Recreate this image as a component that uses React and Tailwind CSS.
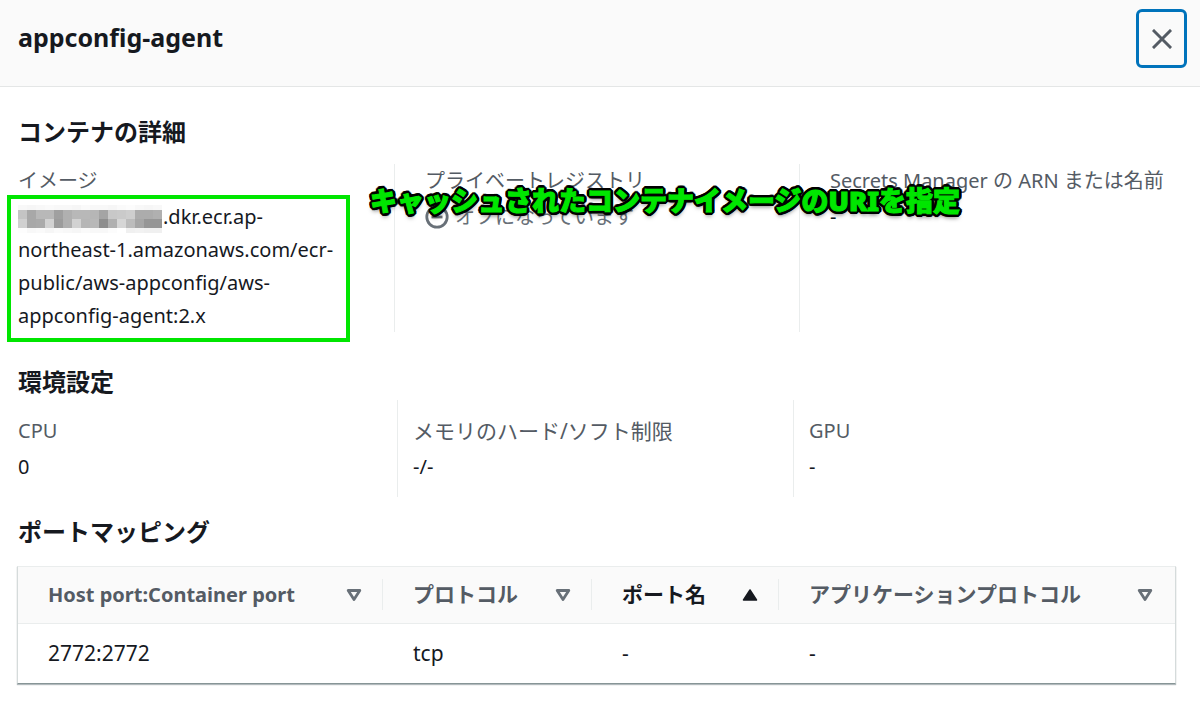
import { useState } from 'react';

// Grey levels of the masked account id, one row of 9px blocks after another
const MASK_ROWS = [
  { height: 'h-[5px]', shades: [248, 246, 248, 250, 248, 248, 246, 250, 248, 248, 246, 250, 252, 248, 246, 248] },
  { height: 'h-[9px]', shades: [196, 168, 184, 184, 160, 176, 184, 184, 182, 164, 200, 202, 206, 172, 172, 176] },
  { height: 'h-[9px]', shades: [208, 168, 170, 210, 156, 176, 210, 182, 184, 142, 176, 214, 188, 166, 150, 150] },
  { height: 'h-[5px]', shades: [253, 248, 250, 246, 250, 248, 246, 250, 248, 248, 252, 255, 240, 242, 240, 240] },
];

const COLUMNS = [
  { id: 'port', label: 'Host port:Container port', width: 'w-[365px]', size: 'text-[20px]' },
  { id: 'protocol', label: 'プロトコル', width: 'w-[209px]', size: 'text-[21px]' },
  { id: 'name', label: 'ポート名', width: 'w-[187px]', size: 'text-[21px]' },
  { id: 'app', label: 'アプリケーションプロトコル', width: '', size: 'text-[21px]' },
];

const ROWS = [{ port: '2772:2772', protocol: 'tcp', name: '-', app: '-' }];

function MaskedId() {
  return (
    <span className="inline-block w-[144px] -my-1 mr-px align-middle">
      {MASK_ROWS.map((row, i) => (
        <span key={i} className={`flex ${row.height}`}>
          {row.shades.map((shade, j) => (
            <span
              key={j}
              className="flex-1"
              style={{ backgroundColor: `rgb(${shade}, ${shade}, ${shade})` }}
            />
          ))}
        </span>
      ))}
    </span>
  );
}

function SortIcon({ active }) {
  return (
    <svg viewBox="0 0 16 16" className="w-4 h-4 shrink-0" aria-hidden="true">
      {active ? (
        <path d="M8 3 L14.5 13 H1.5 Z" fill="#16191f" stroke="#16191f" strokeWidth="1.5" strokeLinejoin="round" />
      ) : (
        <path d="M2.2 3.5 H13.8 L8 12.5 Z" fill="none" stroke="#687078" strokeWidth="2.8" strokeLinejoin="round" />
      )}
    </svg>
  );
}

function Heading({ children }) {
  return <h2 className="text-[24px] leading-[30px] font-bold">{children}</h2>;
}

function Field({ label, children, labelSize = 'text-[20px]', className = '' }) {
  return (
    <div className={`flex flex-col gap-[2px] ${className}`}>
      <dt className={`leading-[34px] whitespace-nowrap text-[#545b64] ${labelSize}`}>{label}</dt>
      <dd className="text-[20px] leading-[33px]">{children}</dd>
    </div>
  );
}

function Header({ onClose }) {
  return (
    <header className="flex items-start justify-between h-[87px] pl-[18px] pr-[13px] pt-[9px] bg-[#fafafa] border-b border-[#e4e6e6]">
      <h1 className="pt-3 text-[25px] leading-[32px] font-bold">appconfig-agent</h1>
      <button
        type="button"
        aria-label="閉じる"
        onClick={onClose}
        className="flex items-center justify-center w-[51px] h-[59px] border-3 border-[#0073bb] rounded-md"
      >
        <svg viewBox="0 0 20 20" className="w-5 h-5" aria-hidden="true">
          <path d="M2 2 L18 18 M18 2 L2 18" fill="none" stroke="#545b64" strokeWidth="3" strokeLinecap="square" />
        </svg>
      </button>
    </header>
  );
}

function ContainerDetails() {
  return (
    <section className="relative flex flex-col gap-[17px] pb-[15px]">
      <Heading>コンテナの詳細</Heading>
      <dl className="grid grid-cols-[376fr_405fr_383fr]">
        <div className="relative pr-[46px]">
          <Field label="イメージ">
            <MaskedId />
            .dkr.ecr.ap-
            <wbr />
            northeast-1.amazonaws.com/ecr-
            <wbr />
            public/aws-appconfig/aws-
            <wbr />
            appconfig-agent:2.x
          </Field>
          <div className="absolute -left-[11px] top-[31px] w-[343px] h-[147px] border-4 border-[#00e600]" />
        </div>
        <Field label="プライベートレジストリ" className="pl-[30px] border-l border-[#eaeded]">
          <span className="flex items-center gap-[6px] text-[#687078]">
            <svg viewBox="0 0 24 24" className="w-6 h-6" aria-hidden="true">
              <circle cx="12" cy="12" r="10.2" fill="none" stroke="currentColor" strokeWidth="2.8" />
              <path d="M6.5 12 H17.5" stroke="currentColor" strokeWidth="2.8" />
            </svg>
            オフになっています
          </span>
        </Field>
        <Field label="Secrets Manager の ARN または名前" className="pl-[30px] border-l border-[#eaeded]">
          -
        </Field>
      </dl>
      <p className="absolute left-[352px] top-[64px] text-[27px] leading-[40px] font-black whitespace-nowrap text-[#00e600] [-webkit-text-stroke:1px_#00e600] [text-shadow:3px_0_black,-3px_0_black,0_3px_black,0_-3px_black,2px_2px_black,2px_-2px_black,-2px_2px_black,-2px_-2px_black,3px_1px_black,3px_-1px_black,-3px_1px_black,-3px_-1px_black,1px_3px_black,-1px_3px_black,1px_-3px_black,-1px_-3px_black,0_4px_4px_rgba(0,0,0,0.5)]">
        キャッシュされたコンテナイメージのURIを指定
      </p>
    </section>
  );
}

function Environment() {
  return (
    <section className="flex flex-col gap-[3px]">
      <Heading>環境設定</Heading>
      <dl className="grid grid-cols-[379fr_396fr_389fr]">
        <Field label="CPU" className="py-[14px]">0</Field>
        <Field
          label="メモリのハード/ソフト制限"
          labelSize="text-[21px]"
          className="py-[14px] pl-[15px] border-l border-[#eaeded]"
        >
          -/-
        </Field>
        <Field label="GPU" className="py-[14px] pl-[15px] border-l border-[#eaeded]">-</Field>
      </dl>
    </section>
  );
}

function PortMappings() {
  const [sortBy, setSortBy] = useState('name');

  return (
    <section className="flex flex-col gap-[19px]">
      <Heading>ポートマッピング</Heading>
      <div className="-ml-px mr-[6px] border border-[#d5dbdb] border-t-[#eaeded] border-b-[#879596] shadow-[0_1px_1px_rgba(0,28,36,0.3)]">
        <table className="w-full table-fixed border-collapse text-left">
          <thead className="bg-[#fafafa]">
            <tr className="border-b border-[#eaeded]">
              {COLUMNS.map((col, i) => (
                <th key={col.id} scope="col" className={`h-[56px] p-0 ${col.width}`}>
                  <button
                    type="button"
                    onClick={() => setSortBy(col.id)}
                    className={`flex items-center justify-between w-full h-[31px] pl-[30px] font-bold ${col.size} ${
                      sortBy === col.id ? 'text-[#16191f]' : 'text-[#545b64]'
                    } ${i < COLUMNS.length - 1 ? 'pr-[20px] border-r border-[#eaeded]' : 'pr-[22px]'}`}
                  >
                    {col.label}
                    <SortIcon active={sortBy === col.id} />
                  </button>
                </th>
              ))}
            </tr>
          </thead>
          <tbody>
            {ROWS.map((row) => (
              <tr key={row.port}>
                {COLUMNS.map((col) => (
                  <td key={col.id} className="h-[60px] p-0 pl-[30px] text-[21px]">
                    {row[col.id]}
                  </td>
                ))}
              </tr>
            ))}
          </tbody>
        </table>
      </div>
    </section>
  );
}

export default function App() {
  const [open, setOpen] = useState(true);

  if (!open) return null;

  return (
    <div
      lang="ja"
      className="min-h-screen bg-white text-[#16191f] font-['Noto_Sans','Noto_Sans_CJK_JP',sans-serif]"
    >
      <Header onClose={() => setOpen(false)} />
      <main className="flex flex-col gap-[20px] px-[18px] pt-[30px]">
        <ContainerDetails />
        <Environment />
        <PortMappings />
      </main>
    </div>
  );
}
